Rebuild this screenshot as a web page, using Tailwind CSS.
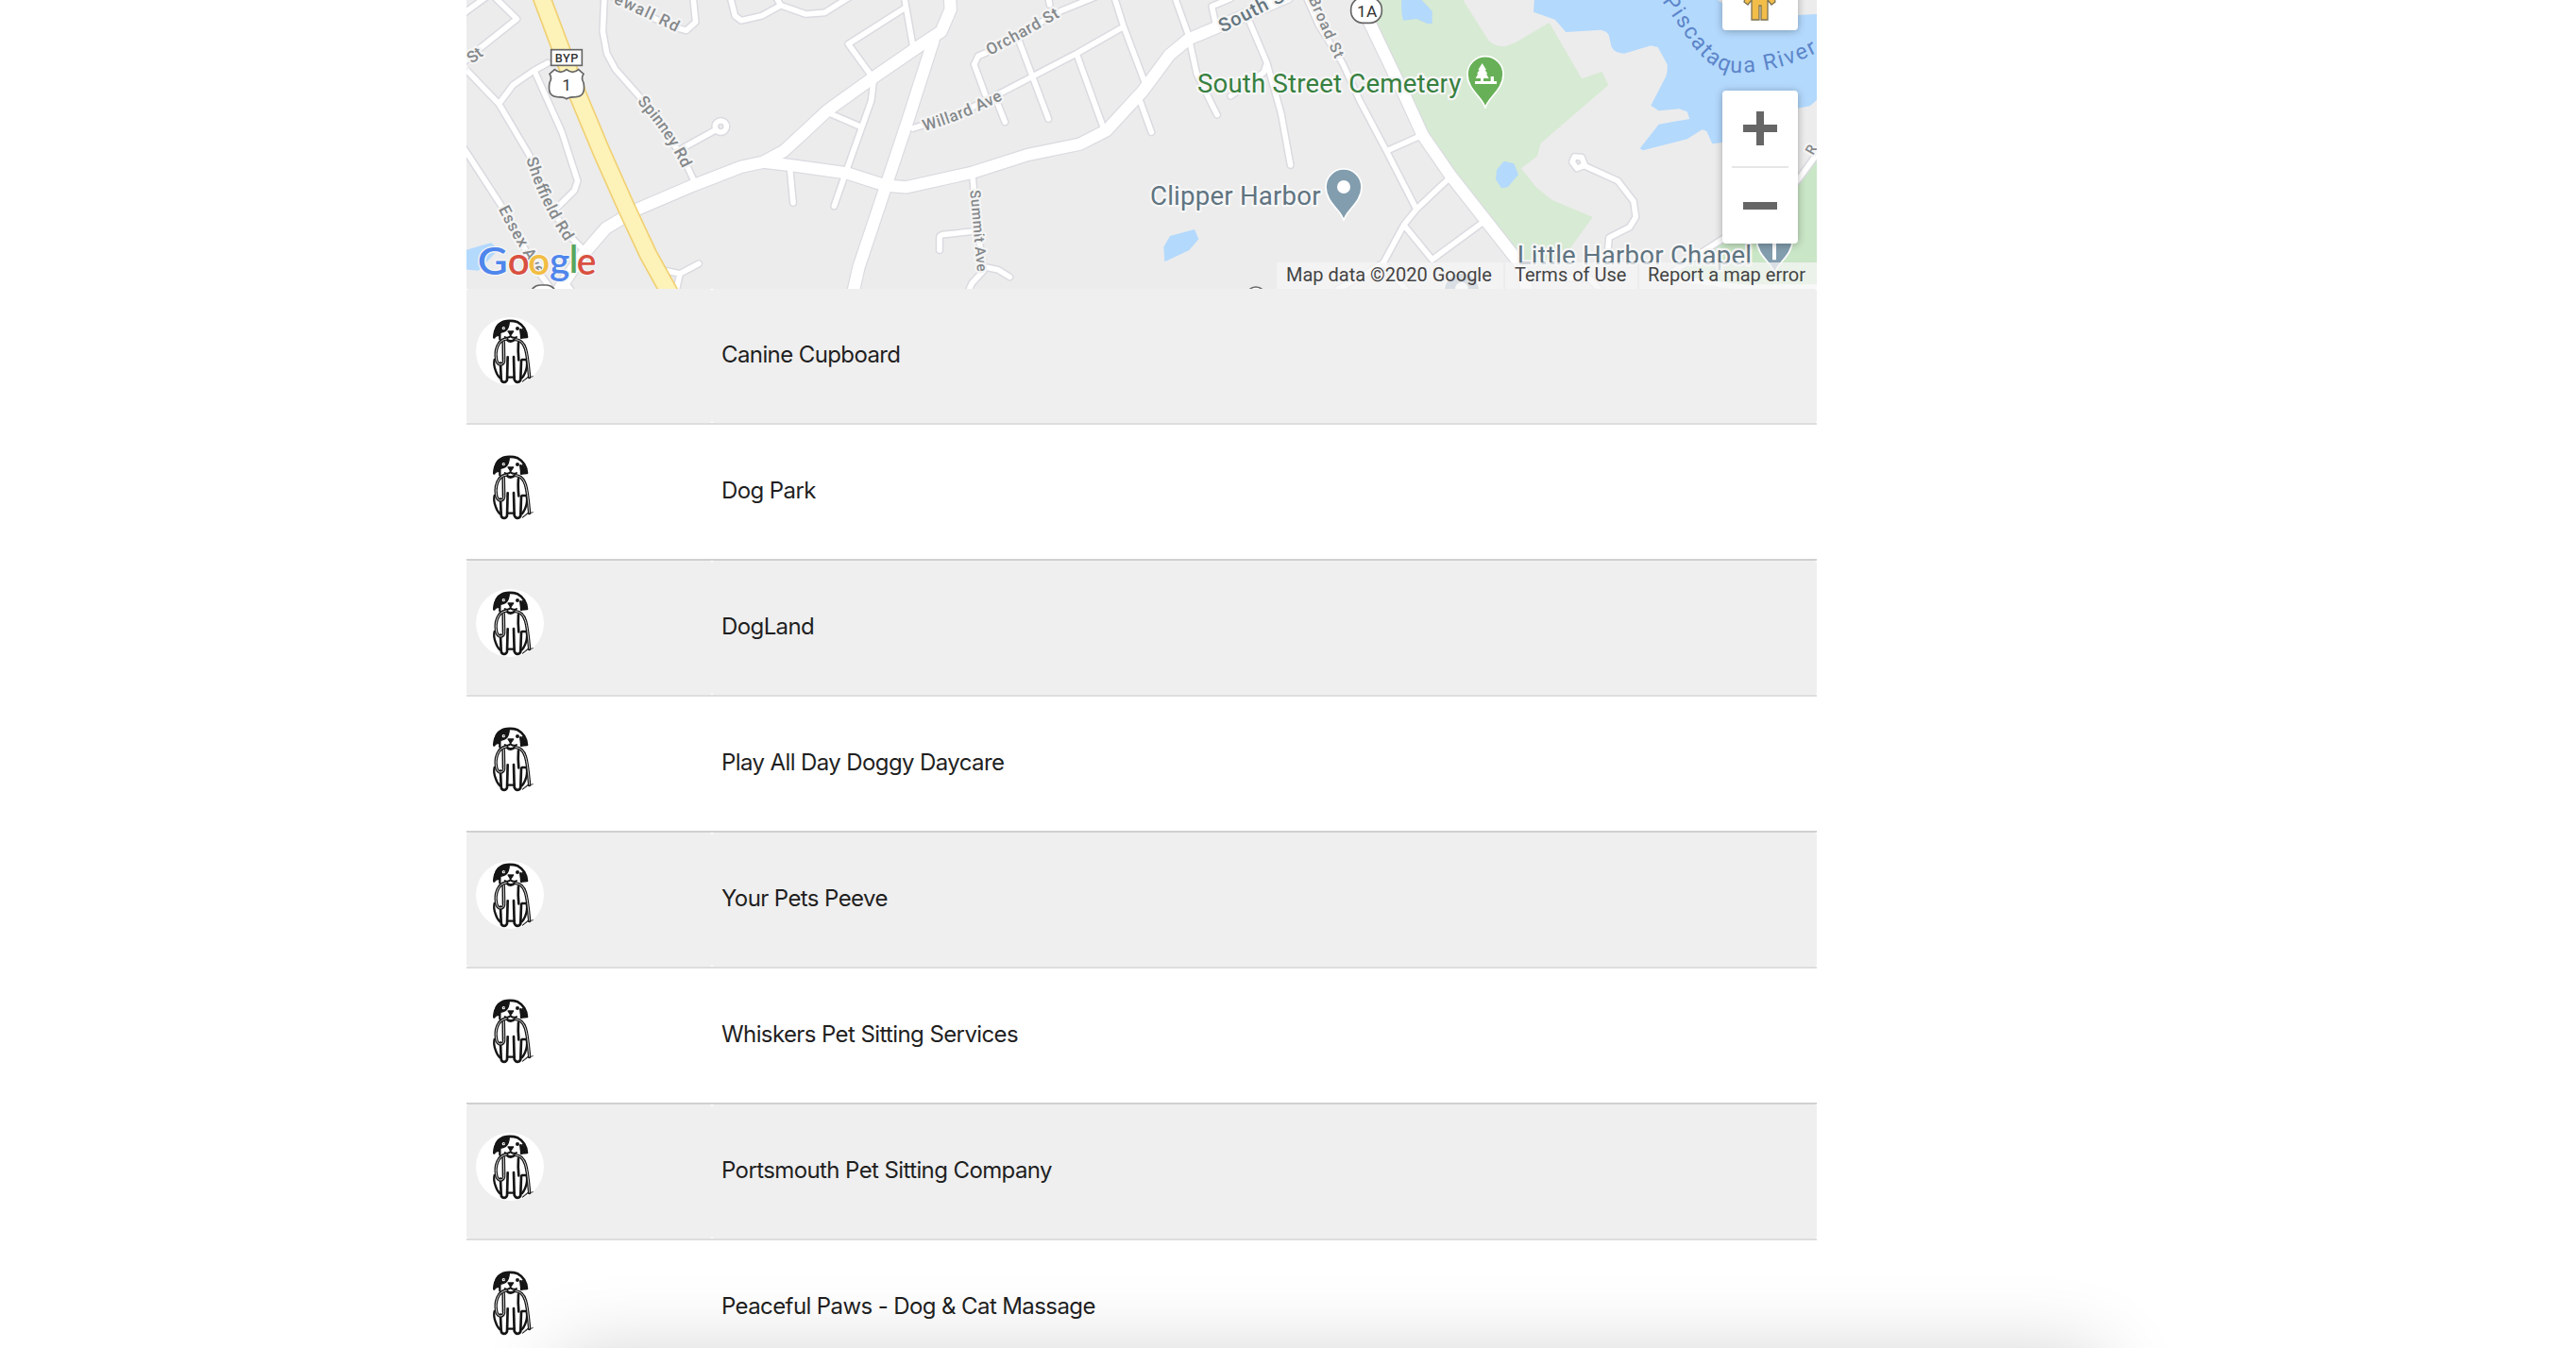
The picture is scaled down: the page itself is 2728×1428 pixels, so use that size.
<!DOCTYPE html>
<html lang="en">
<head>
<meta charset="utf-8">
<title>Dog places</title>
<script src="https://cdn.jsdelivr.net/npm/@tailwindcss/browser@4"></script>
</head>
<body class="relative h-[1428px] w-[2728px] overflow-hidden bg-white font-['Inter',sans-serif] text-[#1f1f1f]">
<svg width="0" height="0" class="absolute">
  <symbol id="dog" viewBox="42 48 216 216">
    <circle cx="150" cy="156" r="108" fill="#fff"/>
    <g fill="none" stroke="#151515" stroke-width="8" stroke-linecap="round" stroke-linejoin="round">
      <path d="M100 112Q103 74 128 63Q152 56 175 64Q201 78 204 111L188 112L184 88"/>
      <path fill="#151515" stroke-width="4" d="M98 113Q99 73 127 62Q139 58 148 62Q147 82 137 91Q129 95 120 97L116 106Q108 106 98 113Z"/>
      <path d="M118 97V118M186 92V114" stroke-width="7"/>
      <path fill="#151515" stroke-width="5" d="M190 86L203 111L190 110Z"/>
      <path fill="#151515" stroke-width="4" d="M144 93H161L155 102H150Z"/>
      <path d="M152 101V109M134 111Q143 116 152 109Q162 116 171 111" stroke-width="6"/>
      <path d="M140 119Q152 130 166 119" stroke-width="8"/>
      <path d="M129 130V185M177 130Q175 155 178 184" stroke-width="8"/>
      <path d="M143 175L141 247Q138 256 128 254Q122 252 122 242L120 194M162 174L164 246Q168 256 177 254Q185 252 184 242L186 186"/>
      <path d="M101 183Q97 198 104 216Q109 233 118 241M203 183Q207 205 198 225Q194 235 188 241M142 239H164M188 183H201" stroke-width="7"/>
      <path d="M139 117C112 119 101 154 107 183Q110 198 120 198Q133 198 131 178L130 126M168 119C203 122 205 164 212 239" stroke-width="10"/>
      <path d="M139 117C112 119 101 154 107 183Q110 198 120 198Q133 198 131 178L130 126M168 119C203 122 205 164 212 239" stroke="#fff" stroke-width="2.5"/>
      <path d="M190 253L205 242L223 236M191 251L210 235" stroke-width="2.5"/>
    </g>
    <circle cx="130" cy="83" r="5" fill="#fff"/><circle cx="131" cy="83" r="2" fill="#151515"/><circle cx="174" cy="84" r="6" fill="#151515"/>
  </symbol>
</svg>

<main class="ml-[494px] h-[1428px] w-[1430px] overflow-hidden">
  <section class="relative h-[306px] overflow-hidden bg-[#ececec] font-['Roboto',sans-serif]">
    <svg class="block h-[306px] w-[1430px]" viewBox="12 0 4290 918">
      <defs>
        <g id="minor">
          <path d="M0 45L75-10M90-20L172 60L40 165L0 200M0 210L115 330L210 490L270 650L345 755L380 790M270 200L225 225L160 270L115 330M230 230L315 420L365 575L355 605L300 660M0 465L120 650L230 850L275 910"/>
          <path d="M450-10L445 100L458 170L485 220L560 305L700 500L735 575M460-20L650 80L710 97L740 70L732-10M850-10L865 50L885 65L950 50L1010 17L1090 45L1150 40L1230-10M990-20L1010 17M700 470L800 415M1040 540L1050 645M645 860L690 870L750 838M690 870L678 925M320 890L350 930"/>
          <circle cx="820" cy="402" r="18"/>
          <path d="M1405 25L1225 140L1298 240M1403-10L1430 145M1305 260L1298 320L1220 540L1180 655M1165 360L1258 400M1680 160L1638 178L1625 205L1660 300M1700 330L1723 388M1680 160L1900 35L2010-10M1860-10L1865 15M1760 110L1861 378M1430 408L1580 360L1720 290L1950 170L2100 85M1950 170L2035 405M2070-10L2100 85L2168 265M2150 315L2188 420"/>
          <path d="M1620 560L1632 700L1655 860L1618 900L1602 935M1665 850L1700 857L1738 880M1515 795V755Q1515 748 1525 746L1625 735"/>
          <path d="M2262-10L2305 110L2332 235L2397 365M2392 75L2380 20L2440-5M2500 70L2555 200L2600 360L2630 525M2555 200L2545 230L2440 305"/>
          <path d="M2680-10L2720 80L2795 200L2850 320L2935 480L3030 665M2935 480L3040 433M3130 570L3030 665L2990 715L2925 835L2870 870L2780 920M2990 715L3080 825L3250 700M2925 835L3000 925"/>
          <path d="M3560 525L3670 575L3720 640L3727 690L3707 722L3642 755L3638 800M4302 490L4240 575M4010 755L3940 800L3820 880"/>
          <path d="M3532 498L3555 500L3565 525L3540 535L3525 515Z"/>
          <path d="M3400 880L3560 885M3580 885L3620 930M3370 870V930"/>
        </g>
        <g id="major">
          <path d="M300 930L340 870L390 800L455 725L555 665L730 590L885 530L955 515L1020 480L1080 425L1160 350L1300 250L1460 140L1520 100L1550 30L1548-10"/>
          <path d="M955 515L1040 525L1220 550L1345 590L1410 595L1620 548L1795 492L1960 458L2045 415L2160 290L2245 175L2305 125L2400 85L2620-10"/>
          <path d="M1495 130L1415 380L1345 590L1258 850L1240 930M2860 30L2890 90L3000 320L3050 430L3140 560L3360 840L3380 918" />
        </g>
        <path id="pin" d="M0 108C-4 76-57 52-57 0A57 57 0 0 1 57 0C57 52 4 76 0 108Z"/>
        <path id="t1" d="M478 10Q570 48 680 104"/>
        <path id="t2" d="M553 323Q650 430 700 540"/>
        <path id="t3" d="M202 505Q240 640 328 770"/>
        <path id="t4" d="M113 665Q170 775 245 890"/>
        <path id="t5" d="M1467 417Q1590 382 1722 313"/>
        <path id="t6" d="M3810 4C3890 112 3940 234 4055 231C4140 230 4230 212 4360 135"/>
      </defs>
      <g fill="#b3d9fd">
        <path d="M0 798L60 780L90 772L115 792L50 860L0 855Z"/>
        <path d="M2227 785L2247 750L2325 729L2338 760L2308 795L2230 832Z"/>
        <path d="M3405-5L3402 38L3470 62L3505 102L3615 95Q3640 100 3642 115L3650 150Q3660 168 3690 170L3775 145L3797 150L3827 205Q3829 225 3823 242L3775 335L3800 352L3865 346L3890 355L3898 378L3800 395L3740 472L3750 478L3890 442L3938 412L3952 417L3970 457L4002 453L4100 370L4250 343L4280 337L4302 318V45L4240 48L4002 10L3980-5Z"/>
      </g>
      <path fill="#d7ead3" d="M2915-5H3175L3260 130Q3280 150 3315 147L3345 135L3452 72L3555 250L3620 228L3640 270L3425 455L3413 497L3363 535L3410 595L3460 635L3590 690L3525 780L3480 850H3370L3050 430L2880 60Z"/>
      <path fill="#c9e6c6" d="M4302 490L4240 590V750L4000 770L3970 800L3830 880L4060 908H4302Z"/>
      <g fill="#b3d9fd">
        <path d="M2983-5H3042L3080 35V75H3065L3030 60L2988 65Q2980 40 2983 0Z"/>
        <path d="M3285 540L3308 512L3340 520L3354 555L3320 595L3300 598L3282 570Z"/>
      </g>
      <g fill="none" stroke-linejoin="round" stroke-linecap="round">
        <use href="#minor" stroke="#dadae0" stroke-width="26"/>
        <use href="#major" stroke="#dadae0" stroke-width="44"/>
        <use href="#minor" stroke="#fff" stroke-width="17"/>
        <use href="#major" stroke="#fff" stroke-width="37"/>
        <path stroke="#f0d072" stroke-width="60" d="M248-15L310 150L365 300L440 480L520 660L590 810L665 945"/>
        <path stroke="#fdf2b8" stroke-width="50" d="M248-15L310 150L365 300L440 480L520 660L590 810L665 945"/>
        <path stroke="#fff" stroke-width="17" d="M3820 880L4060 912H4302"/>
      </g>
      <g stroke="#f4f4f4" stroke-width="14" stroke-linejoin="round" paint-order="stroke" fill="#84888b" font-size="51" font-weight="500">
        <text transform="translate(5 222) rotate(-37)">r St</text>
        <text><textPath href="#t1" textLength="220">ewall Rd</textPath></text>
        <text><textPath href="#t2" textLength="258">Spinney Rd</textPath></text>
        <text><textPath href="#t3" textLength="292">Sheffield Rd</textPath></text>
        <text><textPath href="#t4" textLength="245">Essex Ave</textPath></text>
        <text transform="translate(1675 177) rotate(-29)" textLength="255">Orchard St</text>
        <text><textPath href="#t5" textLength="270">Willard Ave</textPath></text>
        <text font-size="46" transform="translate(1612 605) rotate(85)" textLength="260">Summit Ave</text>
        <text font-size="48" transform="translate(2687 -2) rotate(66)" textLength="208">Broad St</text>
        <text font-size="44" transform="translate(4290 495) rotate(-60)">R</text>
        <text font-size="60" fill="#64757f" transform="translate(2414 104) rotate(-27)" textLength="248">South St</text>
      </g>
      <text fill="#5c85c9" font-size="70"><textPath href="#t6" textLength="610">Piscataqua River</textPath></text>
      <g stroke="#f6f6f6" stroke-width="14" stroke-linejoin="round" paint-order="stroke" font-size="83">
        <text x="2334" y="294" fill="#37803f" textLength="838">South Street Cemetery</text>
        <text x="2184" y="651" fill="#5f7481" textLength="542">Clipper Harbor</text>
        <text x="3350" y="840" fill="#5f7481" textLength="745">Little Harbor Chapel</text>
      </g>
      <g stroke="#fff" stroke-width="5">
        <use href="#pin" x="3249" y="236" fill="#67b057"/>
        <use href="#pin" x="2799" y="594" fill="#829dae"/>
        <use href="#pin" x="4168" y="762" fill="#829dae"/>
        <use href="#pin" x="3174" y="924" fill="#829dae"/>
      </g>
      <circle cx="2799" cy="594" r="21" fill="#fff"/>
      <circle cx="3174" cy="918" r="21" fill="#fff"/>
      <path fill="#fff" d="M3239 201L3252 222H3248L3256 235H3252L3260 249H3243V258H3266V243H3276V258H3285V267H3216V258H3234V249H3218L3226 235H3222L3230 222H3226ZM4161 760H4173V826H4161Z"/>
      <g fill="#fff" stroke="#666" stroke-width="5">
        <rect x="281" y="158" width="98" height="50"/>
        <path d="M292 221Q311 237 330 221Q349 237 368 221L384 235Q375 248 384 263Q392 306 360 308Q340 308 330 314Q320 308 300 308Q268 306 276 263Q285 248 276 235Z"/>
        <rect x="2822" y="-8" width="98" height="81" rx="38"/>
        <rect x="216" y="906" width="80" height="60" rx="30"/>
        <rect x="2490" y="912" width="60" height="60" rx="30"/>
      </g>
      <g fill="#333" text-anchor="middle">
        <text x="330" y="199" font-size="38" font-weight="500" textLength="74">BYP</text>
        <text x="330" y="289" font-size="52">1</text>
        <text x="2873" y="53" font-size="52" textLength="64">1A</text>
      </g>
      <g font-family="Lato" font-weight="600" font-size="118" stroke="#f5f5f5" stroke-width="8" stroke-linejoin="round" paint-order="stroke">
        <text y="872" x="47" fill="#4f86ec" textLength="96" lengthAdjust="spacingAndGlyphs">G</text>
        <text y="872" x="143" fill="#d95040" textLength="69" lengthAdjust="spacingAndGlyphs">o</text>
        <text y="872" x="208" fill="#f2bd42" textLength="69" lengthAdjust="spacingAndGlyphs">o</text>
        <text y="872" x="276" fill="#4f86ec" textLength="64" lengthAdjust="spacingAndGlyphs">g</text>
        <text y="868" x="338" fill="#58a65c">l</text>
        <text y="872" x="362" fill="#d95040" textLength="62" lengthAdjust="spacingAndGlyphs">e</text>
      </g>
    </svg>
    <div class="absolute right-5 -top-12 flex h-20 w-20 items-end justify-center rounded bg-white pb-[10px] shadow-[0_1px_8px_rgba(0,0,0,0.3)]">
      <svg class="h-[40px] w-[36px]" viewBox="0 0 36 40"><path fill="#f2bd48" stroke="#7d7354" stroke-width="1.3" d="M6 2H30L34 20L30 23L26 18V39H19V24H17V39H9V18L5 23L1 20Z"/></svg>
    </div>
    <div class="absolute right-5 top-24 flex h-[162px] w-20 flex-col items-center rounded bg-white shadow-[0_1px_8px_rgba(0,0,0,0.3)]">
      <svg class="h-20 w-20" viewBox="0 0 80 80"><path fill="#666" d="M36 22H44V36H58V44H44V58H36V44H22V36H36Z"/></svg>
      <div class="h-[2px] w-[60px] bg-[#e6e6e6]"></div>
      <svg class="h-20 w-20" viewBox="0 0 80 80"><path fill="#666" d="M22 36H58V44H22Z"/></svg>
    </div>
    <div class="absolute bottom-0 right-0 flex h-7 gap-[2px] whitespace-nowrap text-[20px] leading-[27px] text-[#444]">
      <span class="w-[240px] bg-[#f5f5f5]/75 pl-[10px]">Map data ©2020 Google</span>
      <span class="w-[140px] bg-[#f5f5f5]/75 pl-[10px]">Terms of Use</span>
      <span class="w-[188px] bg-[#f5f5f5]/75 pl-[9px]">Report a map error</span>
    </div>
  </section>
  <section id="rows" class="text-[24px] leading-[30px] tracking-[-0.6px]"></section>
</main>
<div class="absolute left-[592px] top-[1436px] h-[400px] w-[1634px] shadow-[0_0_80px_rgba(0,0,0,0.19)]"></div>
<script>
const names = ['Canine Cupboard','Dog Park','DogLand','Play All Day Doggy Daycare','Your Pets Peeve','Whiskers Pet Sitting Services','Portsmouth Pet Sitting Company','Peaceful Paws - Dog & Cat Massage'];
document.getElementById('rows').innerHTML = names.map((n, i) => `
  <div class="flex h-36 border-b-2 ${i % 2 ? 'border-[#d0d0d0]' : 'border-[#dddddd]'} ">
    <div class="w-[260px] rounded-[3px] pl-[10px] pt-[30px] ${i % 2 ? 'bg-white' : 'bg-[#efefef]'}"><svg class="h-[72px] w-[72px]"><use href="#dog"/></svg></div>
    <div class="flex-1 rounded-[3px] pl-[10px] pt-[55px] ${i % 2 ? 'bg-white' : 'bg-[#efefef]'}"><span class="whitespace-nowrap">${n.replace('&', '&amp;')}</span></div>
  </div>`).join('');
</script>
</body>
</html>
